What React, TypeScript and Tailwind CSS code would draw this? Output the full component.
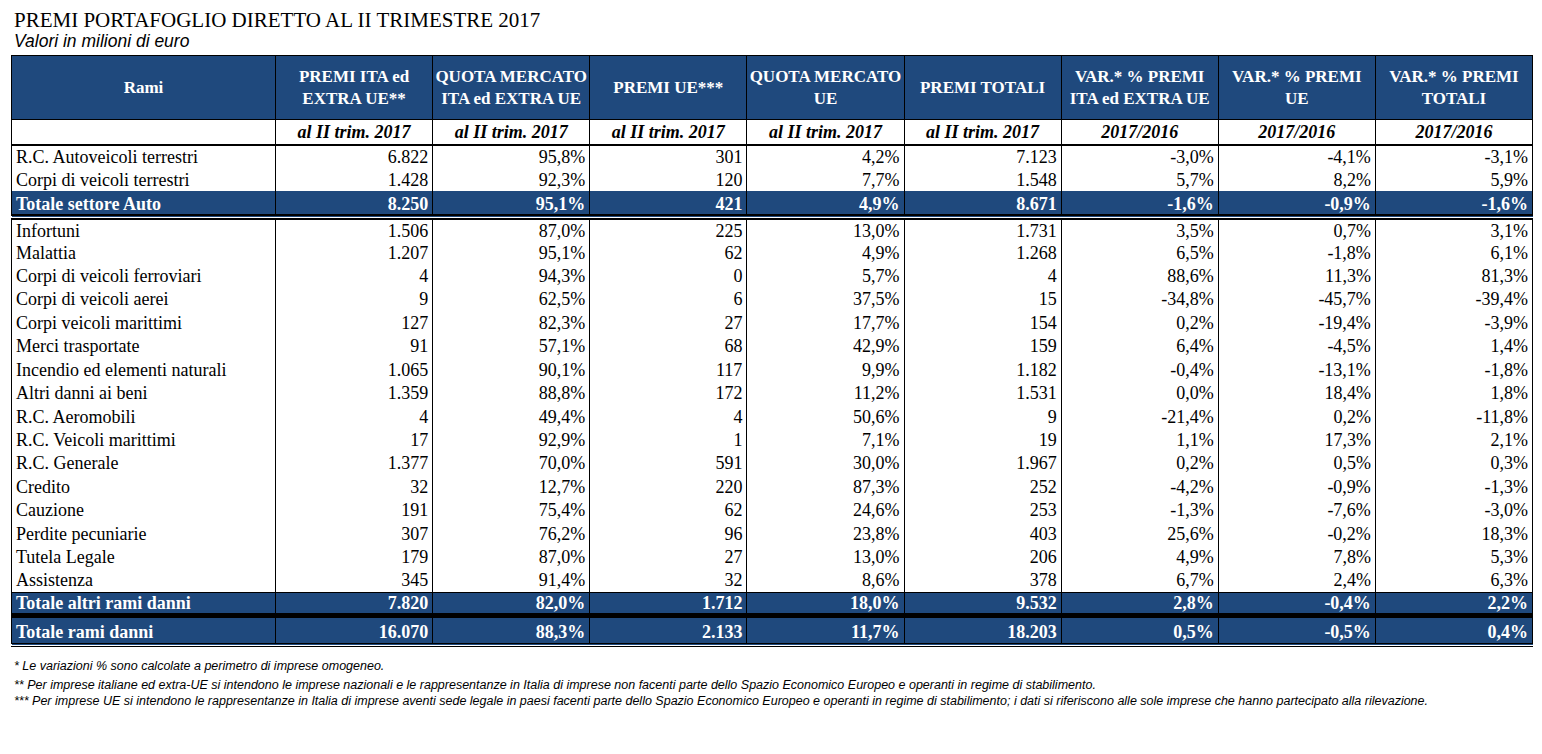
const rowsAuto = [
  ["R.C. Autoveicoli terrestri", "6.822", "95,8%", "301", "4,2%", "7.123", "-3,0%", "-4,1%", "-3,1%"],
  ["Corpi di veicoli terrestri", "1.428", "92,3%", "120", "7,7%", "1.548", "5,7%", "8,2%", "5,9%"],
];
const totAuto = ["Totale settore Auto", "8.250", "95,1%", "421", "4,9%", "8.671", "-1,6%", "-0,9%", "-1,6%"];

const rowsAltri = [
  ["Infortuni", "1.506", "87,0%", "225", "13,0%", "1.731", "3,5%", "0,7%", "3,1%"],
  ["Malattia", "1.207", "95,1%", "62", "4,9%", "1.268", "6,5%", "-1,8%", "6,1%"],
  ["Corpi di veicoli ferroviari", "4", "94,3%", "0", "5,7%", "4", "88,6%", "11,3%", "81,3%"],
  ["Corpi di veicoli aerei", "9", "62,5%", "6", "37,5%", "15", "-34,8%", "-45,7%", "-39,4%"],
  ["Corpi veicoli marittimi", "127", "82,3%", "27", "17,7%", "154", "0,2%", "-19,4%", "-3,9%"],
  ["Merci trasportate", "91", "57,1%", "68", "42,9%", "159", "6,4%", "-4,5%", "1,4%"],
  ["Incendio ed elementi naturali", "1.065", "90,1%", "117", "9,9%", "1.182", "-0,4%", "-13,1%", "-1,8%"],
  ["Altri danni ai beni", "1.359", "88,8%", "172", "11,2%", "1.531", "0,0%", "18,4%", "1,8%"],
  ["R.C. Aeromobili", "4", "49,4%", "4", "50,6%", "9", "-21,4%", "0,2%", "-11,8%"],
  ["R.C. Veicoli marittimi", "17", "92,9%", "1", "7,1%", "19", "1,1%", "17,3%", "2,1%"],
  ["R.C. Generale", "1.377", "70,0%", "591", "30,0%", "1.967", "0,2%", "0,5%", "0,3%"],
  ["Credito", "32", "12,7%", "220", "87,3%", "252", "-4,2%", "-0,9%", "-1,3%"],
  ["Cauzione", "191", "75,4%", "62", "24,6%", "253", "-1,3%", "-7,6%", "-3,0%"],
  ["Perdite pecuniarie", "307", "76,2%", "96", "23,8%", "403", "25,6%", "-0,2%", "18,3%"],
  ["Tutela Legale", "179", "87,0%", "27", "13,0%", "206", "4,9%", "7,8%", "5,3%"],
  ["Assistenza", "345", "91,4%", "32", "8,6%", "378", "6,7%", "2,4%", "6,3%"],
];
const totAltri = ["Totale altri rami danni", "7.820", "82,0%", "1.712", "18,0%", "9.532", "2,8%", "-0,4%", "2,2%"];
const totDanni = ["Totale rami danni", "16.070", "88,3%", "2.133", "11,7%", "18.203", "0,5%", "-0,5%", "0,4%"];

const headers = [
  ["PREMI ITA ed", "EXTRA UE**"],
  ["QUOTA MERCATO", "ITA ed EXTRA UE"],
  ["PREMI UE***"],
  ["QUOTA MERCATO", "UE"],
  ["PREMI TOTALI"],
  ["VAR.* % PREMI", "ITA ed EXTRA UE"],
  ["VAR.* % PREMI", "UE"],
  ["VAR.* % PREMI", "TOTALI"],
];

const subHeaders = [
  "al II trim. 2017",
  "al II trim. 2017",
  "al II trim. 2017",
  "al II trim. 2017",
  "al II trim. 2017",
  "2017/2016",
  "2017/2016",
  "2017/2016",
];

function DataRow({ r }: { r: string[] }) {
  return (
    <tr className="h-[23.45px]">
      {r.map((c, i) => (
        <td
          key={i}
          className={`border-x border-black px-[4px] py-0 leading-[20px] ${i === 0 ? "text-left" : "text-right"}`}
        >
          {c}
        </td>
      ))}
    </tr>
  );
}

function TotalRow({ r, cls, cell }: { r: string[]; cls: string; cell: string }) {
  return (
    <tr className={`bg-[#1f497d] text-white font-bold ${cls}`}>
      {r.map((c, i) => (
        <td
          key={i}
          className={`border-x border-black px-[4px] leading-[20px] ${cell} ${i === 0 ? "text-left" : "text-right"}`}
        >
          {c}
        </td>
      ))}
    </tr>
  );
}

export default function App() {
  return (
    <div className="min-h-screen bg-white px-[11px] pt-[8px] text-black">
      <h1 className="ml-[3px] font-['Liberation_Serif',serif] text-[21px] leading-[24px]">
        PREMI PORTAFOGLIO DIRETTO AL II TRIMESTRE 2017
      </h1>
      <p className="ml-[3px] font-['Liberation_Sans',sans-serif] text-[17.5px] italic leading-[18px]">
        Valori in milioni di euro
      </p>
      <table className="mt-[5px] w-[1522px] table-fixed border-collapse font-['Liberation_Serif',serif] text-[18px]">
        <colgroup>
          <col className="w-[264px]" />
          {headers.map((_, i) => (
            <col key={i} />
          ))}
        </colgroup>
        <thead>
          <tr className="h-[64px] bg-[#1f497d] text-white font-bold text-[17px]">
            <th className="border border-black leading-[22px]">Rami</th>
            {headers.map((h, i) => (
              <th key={i} className="border border-black px-[2px] leading-[22px]">
                {h.map((l, j) => (
                  <div key={j}>{l}</div>
                ))}
              </th>
            ))}
          </tr>
          <tr className="h-[25px] border-b-2 border-black text-[18px] font-bold italic">
            <th className="border border-black"></th>
            {subHeaders.map((s, i) => (
              <th key={i} className="border border-black leading-[20px]">
                {s}
              </th>
            ))}
          </tr>
        </thead>
        <tbody>
          {rowsAuto.map((r, i) => (
            <DataRow key={i} r={r} />
          ))}
          <TotalRow
            r={totAuto}
            cls="h-[25px] border-b-[6px] border-double border-black"
            cell="align-top pt-[3px] pb-0"
          />
          {rowsAltri.map((r, i) => (
            <DataRow key={i} r={r} />
          ))}
          <TotalRow
            r={totAltri}
            cls="h-[23px] border-t border-b-[5px] border-solid border-black"
            cell="align-bottom py-0"
          />
          <TotalRow
            r={totDanni}
            cls="h-[30px] border-b-[4px] border-double border-black"
            cell="align-bottom py-0 pb-[1px]"
          />
        </tbody>
      </table>
      <div className="ml-[3px] mt-[11px] font-['Liberation_Sans',sans-serif] text-[12.5px] italic leading-[16px]">
        <p className="mb-[3px]">* Le variazioni % sono calcolate a perimetro di imprese omogeneo.</p>
        <p>
          ** Per imprese italiane ed extra-UE si intendono le imprese nazionali e le rappresentanze in Italia di imprese non facenti parte dello Spazio Economico Europeo e operanti in regime di stabilimento.
        </p>
        <p>
          *** Per imprese UE si intendono le rappresentanze in Italia di imprese aventi sede legale in paesi facenti parte dello Spazio Economico Europeo e operanti in regime di stabilimento; i dati si riferiscono alle sole imprese che hanno partecipato alla rilevazione.
        </p>
      </div>
    </div>
  );
}
